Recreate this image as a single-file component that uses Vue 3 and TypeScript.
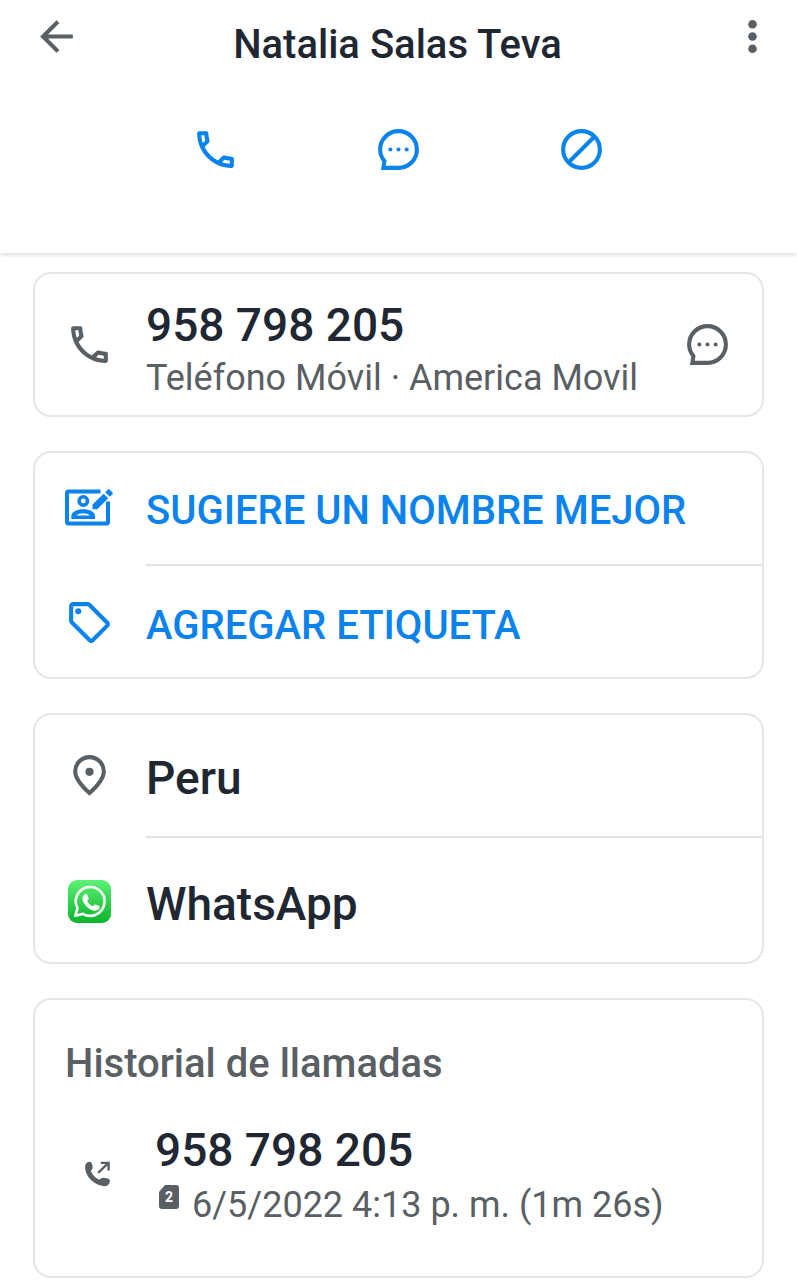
<script setup lang="ts">
interface Contact {
  name: string
  phone: string
  line: string
  country: string
}

interface Call {
  phone: string
  sim: number
  detail: string
}

const contact: Contact = {
  name: 'Natalia Salas Teva',
  phone: '958 798 205',
  line: 'Teléfono Móvil · America Movil',
  country: 'Peru',
}

const calls: Call[] = [
  { phone: '958 798 205', sim: 2, detail: '6/5/2022 4:13 p. m. (1m 26s)' },
]

const phonePath =
  'M6.54 5c.06.89.21 1.76.45 2.59l-1.2 1.2c-.41-1.2-.67-2.47-.76-3.79h1.51m9.86 12.02c.85.24 1.72.39 2.6.45v1.49c-1.32-.09-2.59-.35-3.8-.75l1.2-1.19M7.5 3H4c-.55 0-1 .45-1 1 0 9.39 7.61 17 17 17 .55 0 1-.45 1-1v-3.49c0-.55-.45-1-1-1-1.24 0-2.45-.2-3.57-.57-.1-.04-.21-.05-.31-.05-.26 0-.51.1-.71.29l-2.2 2.2c-2.83-1.45-5.15-3.76-6.59-6.59l2.2-2.2c.28-.28.36-.67.25-1.02C8.7 6.45 8.5 5.25 8.5 4c0-.55-.45-1-1-1z'
const bubblePath = 'M12 21H4.6L5.1 17.7C3.8 16.1 3 14.2 3 12a9 9 0 1 1 9 9z'
</script>

<template>
  <div class="page">
    <header class="header">
      <div class="bar">
        <button class="icon-button" type="button" aria-label="Atrás">
          <svg class="icon" viewBox="0 0 24 24">
            <path fill="currentColor" d="M20 11H7.83l5.59-5.59L12 4l-8 8 8 8 1.41-1.41L7.83 13H20v-2z" />
          </svg>
        </button>
        <h1 class="title">{{ contact.name }}</h1>
        <button class="icon-button end" type="button" aria-label="Más opciones">
          <svg class="icon" viewBox="0 0 24 24">
            <g fill="currentColor">
              <circle cx="12" cy="6" r="2.1" />
              <circle cx="12" cy="12" r="2.1" />
              <circle cx="12" cy="18" r="2.1" />
            </g>
          </svg>
        </button>
      </div>
      <nav class="actions">
        <button class="icon-button blue" type="button" aria-label="Llamar">
          <svg class="icon" viewBox="0 0 24 24"><path fill="currentColor" :d="phonePath" /></svg>
        </button>
        <button class="icon-button blue" type="button" aria-label="Mensaje">
          <svg class="icon" viewBox="0 0 24 24">
            <path fill="none" stroke="currentColor" stroke-width="2" :d="bubblePath" />
            <g fill="currentColor">
              <circle cx="8" cy="12" r="1" />
              <circle cx="12" cy="12" r="1" />
              <circle cx="16" cy="12" r="1" />
            </g>
          </svg>
        </button>
        <button class="icon-button blue" type="button" aria-label="Bloquear">
          <svg class="icon" viewBox="0 0 24 24" fill="none" stroke="currentColor" stroke-width="2">
            <circle cx="12" cy="12" r="9" />
            <path d="M5.6 18.4L18.4 5.6" />
          </svg>
        </button>
      </nav>
    </header>

    <main class="cards">
      <section class="card row">
        <svg class="icon" viewBox="0 0 24 24"><path fill="currentColor" :d="phonePath" /></svg>
        <div class="phone">
          <p class="primary">{{ contact.phone }}</p>
          <p class="secondary">{{ contact.line }}</p>
        </div>
        <button class="icon-button" type="button" aria-label="Enviar mensaje">
          <svg class="icon" viewBox="0 0 24 24">
            <path fill="none" stroke="currentColor" stroke-width="2" :d="bubblePath" />
            <g fill="currentColor">
              <circle cx="8" cy="12" r="1" />
              <circle cx="12" cy="12" r="1" />
              <circle cx="16" cy="12" r="1" />
            </g>
          </svg>
        </button>
      </section>

      <section class="card list suggestions">
        <button class="row blue" type="button">
          <svg class="icon" viewBox="0 0 49 49">
            <path fill="none" stroke="currentColor" stroke-width="4" d="M35.5 7.5H3.5Q2 7.5 2 9V38Q2 39.5 3.500 39.500H41.500Q43 39.500 43 38V17.500" />
            <circle cx="18.3" cy="17" r="4.2" fill="none" stroke="currentColor" stroke-width="3.6" />
            <path fill="currentColor" fill-rule="evenodd" d="M6.3 35V32.4C6.3 27.8 12 25.3 18.200 25.300S30 27.800 30 32.400V35zM11.500 31.600H24.800C23.300 30.100 21 29.300 18.200 29.300S13 30.100 11.500 31.600z" />
            <path fill="currentColor" d="M27.500 25.300V20.600L38.600 9.700 43.200 14.300 32.200 25.300zM40.200 8.200L43 5.400Q43.700 4.700 44.400 5.400L47.600 8.500Q48.300 9.200 47.600 9.900L44.800 12.700z" />
          </svg>
          <span class="label action">SUGIERE UN NOMBRE MEJOR</span>
        </button>
        <button class="row blue" type="button">
          <svg class="icon" viewBox="0 0 24 24" fill="currentColor">
            <path d="M21.41 11.41l-8.83-8.83C12.21 2.21 11.7 2 11.17 2H4c-1.1 0-2 .9-2 2v7.17c0 .53.21 1.04.59 1.41l8.83 8.83c.78.78 2.05.78 2.83 0l7.17-7.17c.78-.78.78-2.04-.01-2.83zM12.83 20L4 11.17V4h7.17L20 12.83 12.83 20z" />
            <circle cx="6.5" cy="6.5" r="1.5" />
          </svg>
          <span class="label action">AGREGAR ETIQUETA</span>
        </button>
      </section>

      <section class="card list places">
        <div class="row">
          <svg class="icon" viewBox="0 0 24 24">
            <path fill="none" stroke="currentColor" stroke-width="2" d="M12 20.6C7.6 16.6 5 13.2 5 10a7 7 0 0 1 14 0c0 3.2-2.6 6.6-7 10.6z" />
            <circle cx="12" cy="10.2" r="2" fill="currentColor" />
          </svg>
          <span class="label primary">{{ contact.country }}</span>
        </div>
        <a class="row" href="#whatsapp">
          <svg class="icon" viewBox="0 0 49 49">
            <defs>
              <linearGradient id="wa" x1="0" y1="0" x2="0" y2="1">
                <stop offset="0" stop-color="#5cf175" />
                <stop offset="1" stop-color="#0bb52b" />
              </linearGradient>
            </defs>
            <rect x="3" y="3" width="43" height="43" rx="9" fill="url(#wa)" />
            <path fill="none" stroke="#fff" stroke-width="2.6" stroke-linejoin="round" d="M10.3 38.7L12.5 31.2A14.4 14.4 0 1 1 17.9 36.8z" />
            <path fill="#fff" d="M19.9 17.2c.6-.6 1.8-.6 2.2.2l1.5 3.5c.3.7-.1 1.4-1.5 3 1.4 2.5 3.3 4.3 6 5.4 1.4-1.7 1.9-2.2 2.6-1.9l3.5 1.7c.8.4.7 1.3.3 2.2-.8 1.7-2.7 2.6-4.5 2.5-5.6-.4-12.6-7-12.6-12.6 0-1.6 1.3-3 2.5-4z" />
          </svg>
          <span class="label primary">WhatsApp</span>
        </a>
      </section>

      <section class="card history">
        <h2 class="heading">Historial de llamadas</h2>
        <article v-for="(call, i) in calls" :key="i" class="call">
          <svg class="call-icon" viewBox="0 0 26 26">
            <path fill="currentColor" d="M.8 3C1.8 1.3 3.5.6 4.8.7 6.6.9 7.3 3 7.6 5.4 7.9 7.8 6.8 8.9 5.8 9.9 7.3 13.7 10.5 17 14.6 18.8 15.8 17.5 16.8 16.5 18.6 16.7L22.8 17.5C24.6 18 25.2 19.3 24.7 21.2 24 24 22 25.2 19.5 25.2 9 24.5.3 15.5.1 6.5.1 5 .3 3.9.8 3z" />
            <path fill="none" stroke="currentColor" stroke-width="2.4" d="M13.2 11.8L23.4 1.8M15.8 1.9H23.6V9.6" />
          </svg>
          <div>
            <p class="primary">{{ call.phone }}</p>
            <p class="secondary detail">
              <span class="sim">{{ call.sim }}</span>
              <span>{{ call.detail }}</span>
            </p>
          </div>
        </article>
      </section>
    </main>
  </div>
</template>

<style>
body {
  margin: 0;
  background: #fff;
}
</style>

<style scoped>
.page {
  font-family: Roboto, "Noto Sans", sans-serif;
  color: #5a5f64;
}

h1,
h2,
p {
  margin: 0;
  font-weight: 500;
}

button {
  border: 0;
  padding: 0;
  background: none;
  font: inherit;
  color: inherit;
  text-align: left;
  cursor: pointer;
}

a {
  color: inherit;
  text-decoration: none;
}

.icon {
  display: block;
  flex: none;
  width: 49px;
  height: 49px;
}

.header {
  padding: 12px 20px 79px 32px;
  box-shadow: 0 3px 3px #0000001a;
}

.bar {
  display: grid;
  grid-template-columns: 49px 1fr 63px;
  align-items: start;
}

.title {
  padding-top: 9px;
  font-size: 40px;
  line-height: 48px;
  text-align: center;
  color: #1f2832;
}

.end {
  justify-self: end;
}

.actions {
  display: flex;
  justify-content: center;
  gap: 134px;
  margin-top: 56px;
  padding-right: 12px;
}

.page .blue {
  color: #0a83ec;
}

.cards {
  display: flex;
  flex-direction: column;
  gap: 34px;
  padding: 19px 33px 2px;
}

.card {
  border: 2px solid #e5e6e7;
  border-radius: 18px;
}

.row {
  display: flex;
  align-items: center;
  gap: 32px;
  padding-left: 30px;
}

.card.row {
  padding-right: 30px;
}

.phone {
  flex: 1;
  padding: 24px 0 11px;
}

.primary {
  font-size: 46px;
  line-height: 54px;
  font-weight: 500;
  color: #1f2832;
}

.secondary {
  font-size: 36px;
  line-height: 52px;
  font-weight: 400;
}

.list {
  display: flex;
  flex-direction: column;
}

.label {
  flex: 1;
  align-self: stretch;
  display: flex;
  align-items: center;
}

.action {
  padding-top: 4px;
  font-size: 40px;
  line-height: 48px;
  font-weight: 500;
}

.row + .row .label {
  border-top: 2px solid #e1e2e3;
}

.suggestions .row {
  min-height: 111px;
}

.suggestions .row + .row {
  min-height: 113px;
}

.row + .row .icon {
  margin-top: 4px;
}

.suggestions .row + .row .label {
  padding-top: 8px;
}

.places .row {
  min-height: 121px;
}

.places .row + .row {
  min-height: 126px;
}

.places .row .label {
  padding-top: 4px;
}

.places .row + .row .label {
  padding-top: 8px;
}

.history {
  padding: 40px 30px 45px;
}

.heading {
  font-size: 40px;
  line-height: 48px;
}

.call {
  display: flex;
  align-items: flex-start;
  gap: 44px;
  margin-top: 35px;
  padding-left: 20px;
}

.call-icon {
  flex: none;
  width: 26px;
  height: 26px;
  margin-top: 38px;
}

.detail {
  display: flex;
  align-items: flex-start;
  gap: 13px;
  padding: 2px 0 0 4px;
}

.sim {
  display: grid;
  place-items: center;
  width: 20px;
  height: 24px;
  margin-top: 6px;
  border-radius: 3px;
  background: #5a5f64;
  clip-path: polygon(6px 0, 100% 0, 100% 100%, 0 100%, 0 7px);
  font-size: 14px;
  line-height: 24px;
  font-weight: 700;
  color: #fff;
}
</style>
